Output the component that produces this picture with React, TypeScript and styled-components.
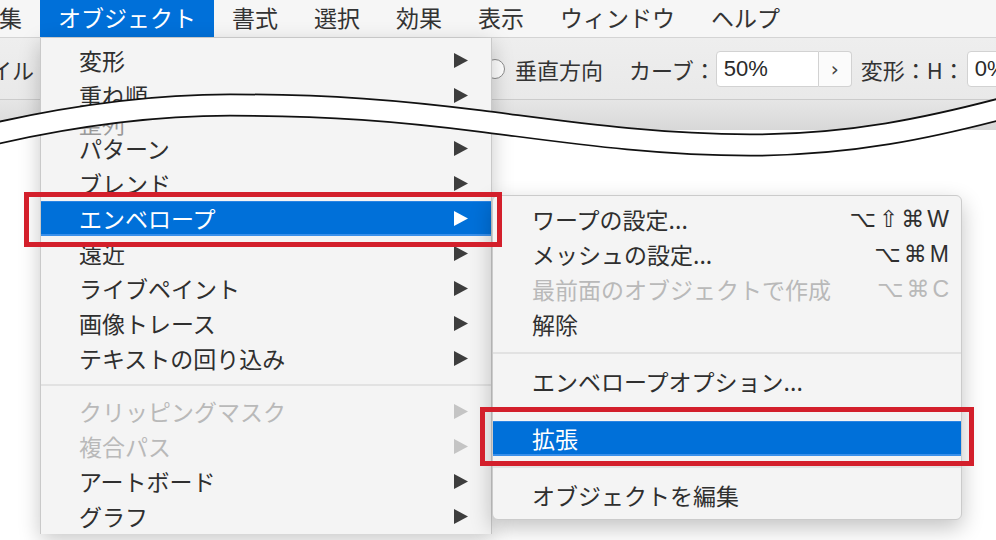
import React from "react";
import styled, { createGlobalStyle } from "styled-components";

const GlobalStyle = createGlobalStyle`
  html, body {
    margin: 0;
    padding: 0;
    background: #ffffff;
  }
  body {
    font-family: "Noto Sans CJK JP", "Noto Sans", sans-serif;
  }
`;

const Screen = styled.div`
  position: relative;
  width: 996px;
  height: 540px;
  overflow: hidden;
  display: flex;
  flex-direction: column;
  background: #ffffff;
  color: #2f2f2f;
  font-family: "Noto Sans CJK JP", "Noto Sans", sans-serif;
`;

const MenuBar = styled.div`
  height: 38px;
  flex-shrink: 0;
  display: flex;
  align-items: stretch;
  margin-left: -42px;
  background: #f6f6f6;
  border-bottom: 1px solid #d4d4d4;
  box-sizing: border-box;
`;

const MenuTitle = styled.div<{ $active?: boolean }>`
  display: flex;
  align-items: center;
  padding: 0 18px 2px;
  font-size: 23px;
  line-height: 1;
  white-space: nowrap;
  background: ${(p) => (p.$active ? "#0070d9" : "transparent")};
  color: ${(p) => (p.$active ? "#ffffff" : "#333333")};
`;

const Toolbar = styled.div`
  height: 62px;
  flex-shrink: 0;
  display: flex;
  align-items: center;
  background: linear-gradient(#eeeeee, #e9e9e9);
  border-bottom: 1px solid #cbcbcb;
  box-sizing: border-box;
  font-size: 22px;
  color: #333333;
  white-space: nowrap;
`;

const ToolLabel = styled.span<{ $gap?: number }>`
  margin-left: ${(p) => p.$gap ?? 0}px;
  line-height: 1;
`;

const Radio = styled.span`
  margin-left: 451px;
  width: 20px;
  height: 20px;
  flex-shrink: 0;
  border-radius: 50%;
  border: 1.5px solid #8c8c8c;
  background: #ffffff;
  box-sizing: border-box;
`;

const Field = styled.div<{ $gap?: number; $width: number }>`
  margin-left: ${(p) => p.$gap ?? 0}px;
  width: ${(p) => p.$width}px;
  height: 36px;
  flex-shrink: 0;
  display: flex;
  align-items: center;
  padding-left: 7px;
  box-sizing: border-box;
  background: #ffffff;
  border: 1px solid #d2d2d2;
  border-radius: 4px 0 0 4px;
  font-family: "Liberation Sans", "Noto Sans CJK JP", sans-serif;
  font-size: 22px;
  color: #2a2a2a;
`;

const Stepper = styled.div`
  width: 33px;
  height: 36px;
  flex-shrink: 0;
  display: flex;
  align-items: center;
  justify-content: center;
  box-sizing: border-box;
  background: #fbfbfb;
  border: 1px solid #d2d2d2;
  border-left: none;
  border-radius: 0 4px 4px 0;
  font-family: "DejaVu Sans", sans-serif;
  font-size: 20px;
  color: #444444;
`;

const TabStrip = styled.div`
  height: 30px;
  flex-shrink: 0;
  background: linear-gradient(#e6e6e6, #d8d8d8);
`;

const Canvas = styled.div`
  flex: 1;
  background: #ffffff;
`;

const DropMenu = styled.div`
  position: absolute;
  left: 40px;
  top: 38px;
  width: 452px;
  padding-top: 5px;
  background: #f4f4f4;
  border-left: 1px solid #c9c9c9;
  border-right: 1px solid #c9c9c9;
  box-sizing: border-box;
  box-shadow: 0 6px 20px rgba(0, 0, 0, 0.22);
  z-index: 2;
`;

const SubMenu = styled.div`
  position: absolute;
  left: 492px;
  top: 195px;
  width: 470px;
  padding: 6px 0;
  background: #f4f4f4;
  border: 1px solid #cbcbcb;
  border-radius: 6px;
  box-sizing: border-box;
  box-shadow: 0 8px 22px rgba(0, 0, 0, 0.24);
  z-index: 3;
`;

const Row = styled.div<{ $active?: boolean; $disabled?: boolean; $sub?: boolean }>`
  height: 35px;
  display: flex;
  align-items: center;
  padding: ${(p) => (p.$sub ? "0 12px 0 39px" : "0 23px 0 38px")};
  font-size: 23px;
  line-height: 35px;
  white-space: nowrap;
  background: ${(p) => (p.$active ? "#0070d9" : "transparent")};
  box-shadow: ${(p) => (p.$active ? "inset 0 -2px 0 #3a90ea, inset 0 1px 0 #2a84e4" : "none")};
  color: ${(p) => (p.$active ? "#ffffff" : p.$disabled ? "#b9b9b9" : "#2f2f2f")};
`;

const CutRow = styled(Row)`
  height: 18px;
  align-items: flex-start;
  line-height: 20px;
  color: #9a9a9a;
  overflow: visible;
`;

const RowLabel = styled.span`
  flex: 1;
`;

const Shortcut = styled.span`
  font-family: "Liberation Sans", "DejaVu Sans", sans-serif;
  font-size: 23px;
  letter-spacing: 3px;
  margin-right: -3px;
`;

const Separator = styled.div<{ $height: number }>`
  height: ${(p) => p.$height}px;
  display: flex;
  align-items: center;
  &::after {
    content: "";
    flex: 1;
    height: 2px;
    background: #e2e2e2;
  }
`;

const ArrowIcon = styled.svg`
  width: 14px;
  height: 15px;
  flex-shrink: 0;
`;

const Annotation = styled.div<{ $x: number; $y: number; $w: number; $h: number }>`
  position: absolute;
  left: ${(p) => p.$x}px;
  top: ${(p) => p.$y}px;
  width: ${(p) => p.$w}px;
  height: ${(p) => p.$h}px;
  border: 5px solid #d31f2b;
  box-sizing: border-box;
  z-index: 6;
`;

const CutMark = styled.svg`
  position: absolute;
  left: 0;
  top: 0;
  width: 996px;
  height: 200px;
  z-index: 5;
  pointer-events: none;
`;

function Arrow({ color }: { color: string }) {
  return (
    <ArrowIcon viewBox="0 0 14 15">
      <polygon points="0,0 14,7.5 0,15" fill={color} />
    </ArrowIcon>
  );
}

type Item = { label: string; disabled?: boolean; active?: boolean };

const upperItems: Item[] = [{ label: "変形" }, { label: "重ね順" }];

const lowerItems: Item[] = [
  { label: "パターン" },
  { label: "ブレンド" },
  { label: "エンベロープ", active: true },
  { label: "遠近" },
  { label: "ライブペイント" },
  { label: "画像トレース" },
  { label: "テキストの回り込み" },
];

const lastItems: Item[] = [
  { label: "クリッピングマスク", disabled: true },
  { label: "複合パス", disabled: true },
  { label: "アートボード" },
  { label: "グラフ" },
];

function MainRow({ item }: { item: Item }) {
  const arrowColor = item.active ? "#ffffff" : item.disabled ? "#c4c4c4" : "#3d3d3d";
  return (
    <Row $active={item.active} $disabled={item.disabled}>
      <RowLabel>{item.label}</RowLabel>
      <Arrow color={arrowColor} />
    </Row>
  );
}

const wavePath =
  "M-20,137 C60,118 150,105 230,105 C330,105 400,111 480,121 C560,131 650,145 750,145 C850,145 930,128 1012,106";

export default function App() {
  const menus = ["編集", "オブジェクト", "書式", "選択", "効果", "表示", "ウィンドウ", "ヘルプ"];
  return (
    <>
      <GlobalStyle />
      <Screen>
        <MenuBar>
          {menus.map((m) => (
            <MenuTitle key={m} $active={m === "オブジェクト"}>
              {m}
            </MenuTitle>
          ))}
        </MenuBar>

        <Toolbar>
          <ToolLabel $gap={-54}>スタイル</ToolLabel>
          <Radio />
          <ToolLabel $gap={10}>垂直方向</ToolLabel>
          <ToolLabel $gap={26}>カーブ：</ToolLabel>
          <Field $width={103}>50%</Field>
          <Stepper>›</Stepper>
          <ToolLabel $gap={9}>変形：H：</ToolLabel>
          <Field $gap={2} $width={80}>0%</Field>
        </Toolbar>
        <TabStrip />
        <Canvas />

        <DropMenu>
          {upperItems.map((it) => (
            <MainRow key={it.label} item={it} />
          ))}
          <CutRow>
            <RowLabel>整列</RowLabel>
            <Arrow color="#cfcfcf" />
          </CutRow>
          {lowerItems.map((it) => (
            <MainRow key={it.label} item={it} />
          ))}
          <Separator $height={18} />
          {lastItems.map((it) => (
            <MainRow key={it.label} item={it} />
          ))}
        </DropMenu>

        <SubMenu>
          <Row $sub>
            <RowLabel>ワープの設定...</RowLabel>
            <Shortcut>⌥⇧⌘W</Shortcut>
          </Row>
          <Row $sub>
            <RowLabel>メッシュの設定...</RowLabel>
            <Shortcut>⌥⌘M</Shortcut>
          </Row>
          <Row $sub $disabled>
            <RowLabel>最前面のオブジェクトで作成</RowLabel>
            <Shortcut>⌥⌘C</Shortcut>
          </Row>
          <Row $sub>
            <RowLabel>解除</RowLabel>
          </Row>
          <Separator $height={22} />
          <Row $sub>
            <RowLabel>エンベロープオプション...</RowLabel>
          </Row>
          <Separator $height={22} />
          <Row $sub $active>
            <RowLabel>拡張</RowLabel>
          </Row>
          <Separator $height={22} />
          <Row $sub>
            <RowLabel>オブジェクトを編集</RowLabel>
          </Row>
        </SubMenu>

        <CutMark viewBox="0 0 996 200">
          <path d={wavePath} fill="none" stroke="#111111" strokeWidth={23} />
          <path d={wavePath} fill="none" stroke="#ffffff" strokeWidth={19.5} />
        </CutMark>

        <Annotation $x={24} $y={192} $w={478} $h={55} />
        <Annotation $x={480} $y={407} $w={494} $h={59} />
      </Screen>
    </>
  );
}
